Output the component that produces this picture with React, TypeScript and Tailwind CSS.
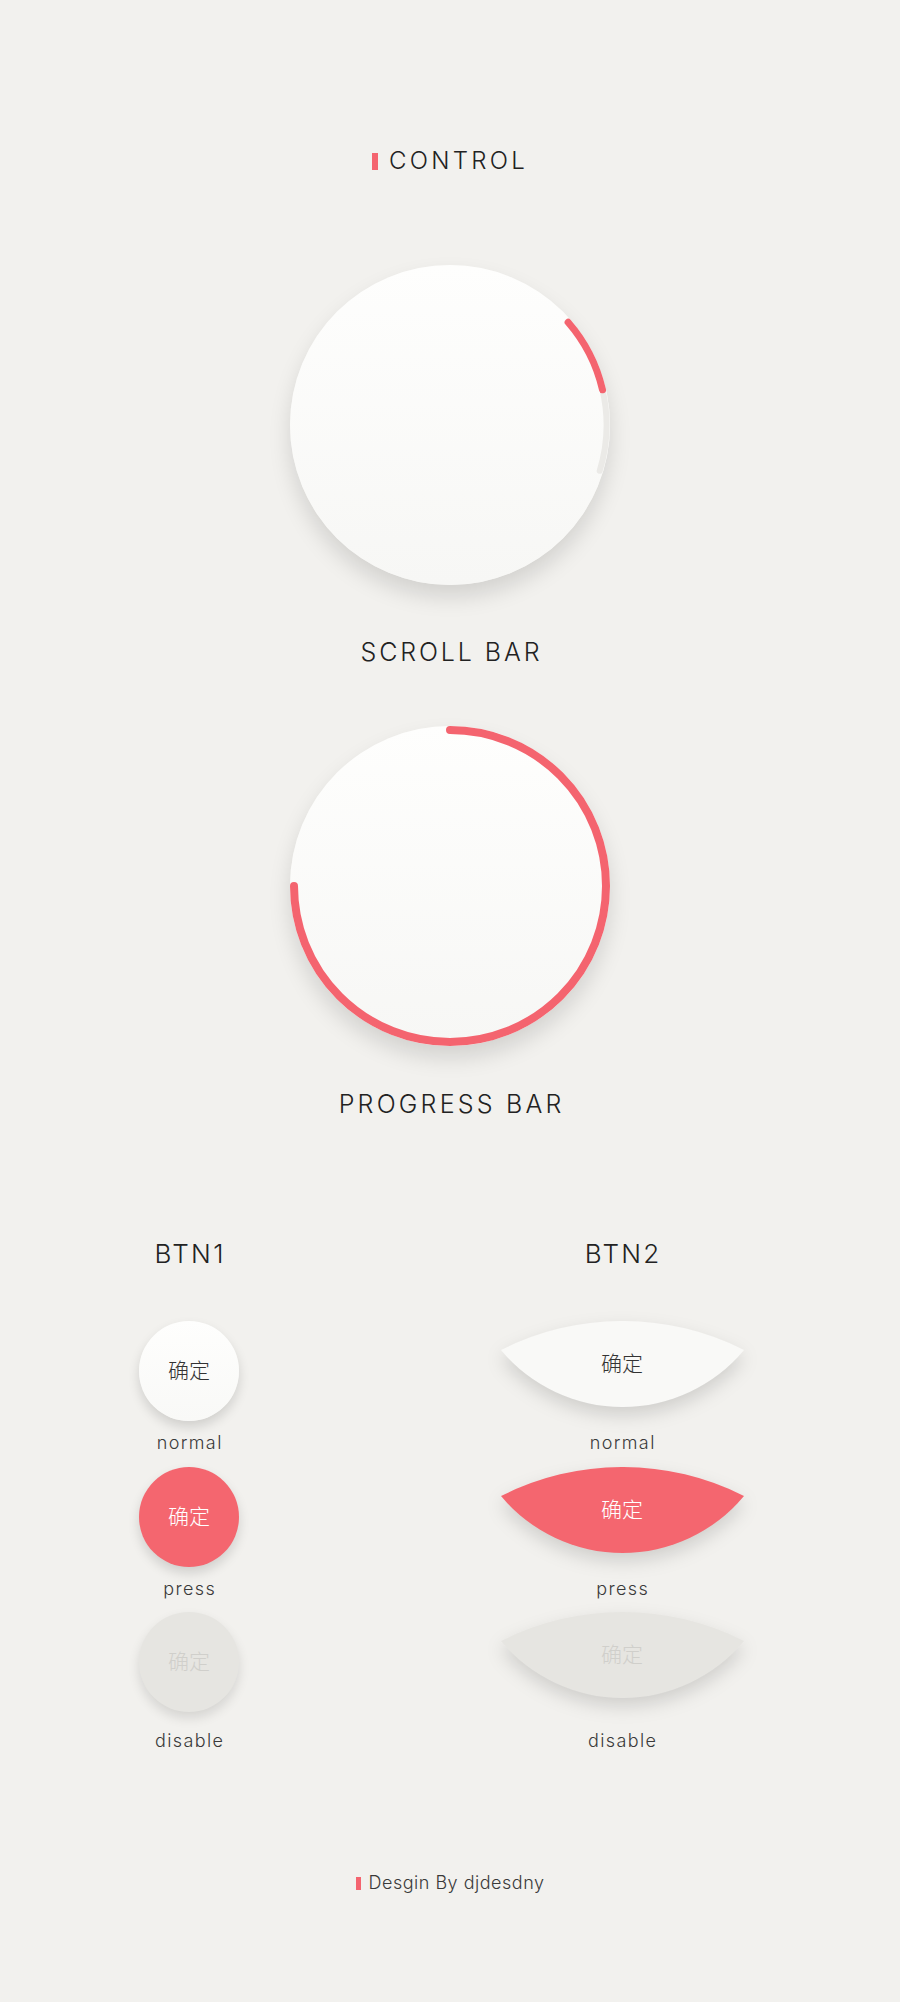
import React from "react";

const RED = "#f4646f";

function BigCircle({ children }: { children?: React.ReactNode }) {
  return (
    <div className="relative h-[320px] w-[320px] rounded-full bg-gradient-to-b from-[#fefefd] to-[#f7f7f5] shadow-[0_12px_22px_rgba(0,0,0,0.13)]">
      {children}
    </div>
  );
}

function ScrollArc() {
  return (
    <svg className="absolute inset-0" width="320" height="320" viewBox="0 0 320 320">
      <path d="M312.5 124.8 A156.5 156.5 0 0 1 309.7 205.8" fill="none" stroke="#ebeae7" strokeWidth="6" strokeLinecap="round" />
      <path d="M278.1 57.3 A156.5 156.5 0 0 1 312.5 124.8" fill="none" stroke={RED} strokeWidth="7" strokeLinecap="round" />
    </svg>
  );
}

function ProgressArc() {
  return (
    <svg className="absolute inset-0" width="320" height="320" viewBox="0 0 320 320">
      <path d="M160 4 A156 156 0 1 1 4 160" fill="none" stroke={RED} strokeWidth="8" strokeLinecap="round" />
    </svg>
  );
}

function Leaf({ fill, text, textColor }: { fill: string; text: string; textColor: string }) {
  return (
    <div className="relative h-[86px] w-[243px]">
      <svg
        className="absolute inset-0 drop-shadow-[0_8px_9px_rgba(0,0,0,0.14)]"
        width="243"
        height="86"
        viewBox="0 0 243 86"
      >
        <path d="M0 29 A269 269 0 0 1 243 29 A158 158 0 0 1 0 29 Z" fill={fill} />
      </svg>
      <div
        className="absolute inset-0 flex items-center justify-center text-[21px] font-light"
        style={{ color: textColor }}
      >
        {text}
      </div>
    </div>
  );
}

function Label({ children, className = "" }: { children: React.ReactNode; className?: string }) {
  return (
    <div className={"h-[22px] pl-[1.4px] text-[18px] leading-[22px] font-light tracking-[1.4px] text-[#3a3a3a] " + className}>
      {children}
    </div>
  );
}

export default function App() {
  return (
    <div className="min-h-[2002px] w-full bg-[#f2f1ee] font-['Inter','Noto_Sans_CJK_SC',sans-serif] text-[#333]">
      <div className="flex flex-col items-center">
        <div className="mt-[149px] flex h-[24px] items-center">
          <div className="mr-[11px] h-[17px] w-[6px] bg-[#f4646f]" />
          <div className="text-[24px] leading-[24px] font-[260] tracking-[3.3px] text-[#222]">CONTROL</div>
        </div>

        <div className="mt-[92px]">
          <BigCircle>
            <ScrollArc />
          </BigCircle>
        </div>

        <div className="mt-[55px] h-[24px] pl-[2.9px] text-[25px] leading-[24px] font-[260] tracking-[2.9px] text-[#222]">
          SCROLL BAR
        </div>

        <div className="mt-[62px]">
          <BigCircle>
            <ProgressArc />
          </BigCircle>
        </div>

        <div className="mt-[46px] h-[24px] pl-[3.2px] text-[25px] leading-[24px] font-[260] tracking-[3.2px] text-[#222]">
          PROGRESS BAR
        </div>
      </div>

      <div className="mt-[126px] flex">
        <div className="ml-[64px] flex w-[250px] flex-col items-center">
          <div className="h-[24px] pl-[2.3px] text-[26px] leading-[24px] font-[260] tracking-[2.3px] text-[#222]">BTN1</div>
          <div className="mt-[55px] flex h-[100px] w-[100px] items-center justify-center rounded-full bg-gradient-to-b from-[#fefefd] to-[#f9f9f7] text-[21px] font-light text-[#333] shadow-[0_6px_12px_rgba(0,0,0,0.14)]">
            确定
          </div>
          <Label className="mt-[11px]">normal</Label>
          <div className="mt-[13px] flex h-[100px] w-[100px] items-center justify-center rounded-full bg-[#f4666f] text-[21px] font-light text-white shadow-[0_6px_12px_rgba(0,0,0,0.14)]">
            确定
          </div>
          <Label className="mt-[11px]">press</Label>
          <div className="mt-[12px] flex h-[100px] w-[100px] items-center justify-center rounded-full bg-[#e6e5e1] text-[21px] font-light text-[#d0cfcb] shadow-[0_6px_12px_rgba(0,0,0,0.12)]">
            确定
          </div>
          <Label className="mt-[18px]">disable</Label>
        </div>

        <div className="ml-[178px] flex w-[260px] flex-col items-center">
          <div className="h-[24px] pl-[2.3px] text-[26px] leading-[24px] font-[260] tracking-[2.3px] text-[#222]">BTN2</div>
          <div className="mt-[55px] h-[100px]">
            <Leaf fill="#f9f9f7" text="确定" textColor="#333" />
          </div>
          <Label className="mt-[11px]">normal</Label>
          <div className="mt-[13px] h-[100px]">
            <Leaf fill="#f4666f" text="确定" textColor="#ffffff" />
          </div>
          <Label className="mt-[11px]">press</Label>
          <div className="mt-[12px] h-[100px]">
            <Leaf fill="#e6e5e1" text="确定" textColor="#d0cfcb" />
          </div>
          <Label className="mt-[18px]">disable</Label>
        </div>
      </div>

      <div className="mt-[120px] flex items-center justify-center">
        <div className="mr-[8px] h-[13px] w-[5px] bg-[#f4646f]" />
        <div className="h-[22px] text-[18px] leading-[22px] font-light tracking-[0.5px] text-[#3a3a3a]">
          Desgin By djdesdny
        </div>
      </div>
    </div>
  );
}
